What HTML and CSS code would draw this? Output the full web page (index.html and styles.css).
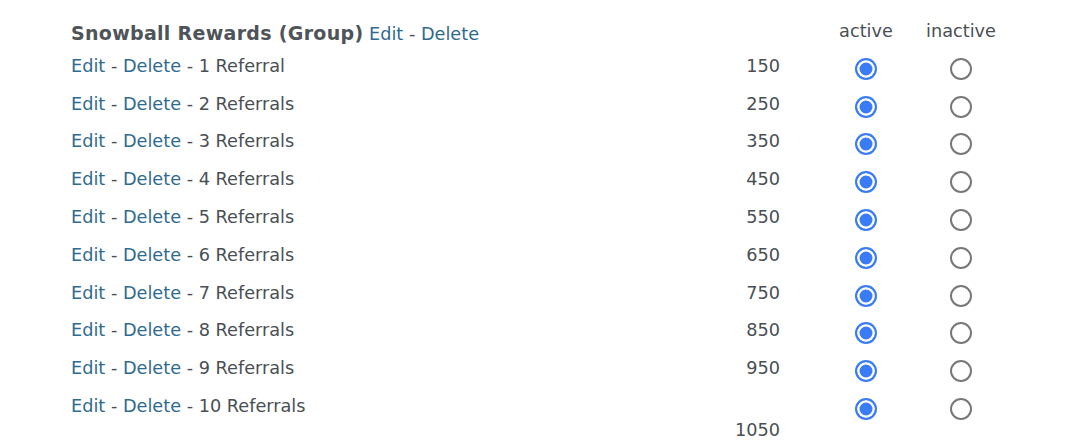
FILE: index.html
```html
<!DOCTYPE html>
<html>
<head>
<meta charset="utf-8">
<link rel="stylesheet" href="styles.css">
</head>
<body>
<table class="rewards">
  <colgroup>
    <col class="c-name"><col class="c-num"><col class="c-act"><col class="c-inact">
  </colgroup>
  <tr class="head">
    <td class="title"><b>Snowball Rewards (Group)</b> <a href="#">Edit</a> - <a href="#">Delete</a></td>
    <td></td>
    <td class="lbl">active</td>
    <td class="lbl">inactive</td>
  </tr>
  <tr><td><a href="#">Edit</a> - <a href="#">Delete</a> - 1 Referral</td><td class="num">150</td><td><input type="radio" name="r1" checked></td><td><input type="radio" name="r1"></td></tr>
  <tr><td><a href="#">Edit</a> - <a href="#">Delete</a> - 2 Referrals</td><td class="num">250</td><td><input type="radio" name="r2" checked></td><td><input type="radio" name="r2"></td></tr>
  <tr><td><a href="#">Edit</a> - <a href="#">Delete</a> - 3 Referrals</td><td class="num">350</td><td><input type="radio" name="r3" checked></td><td><input type="radio" name="r3"></td></tr>
  <tr><td><a href="#">Edit</a> - <a href="#">Delete</a> - 4 Referrals</td><td class="num">450</td><td><input type="radio" name="r4" checked></td><td><input type="radio" name="r4"></td></tr>
  <tr><td><a href="#">Edit</a> - <a href="#">Delete</a> - 5 Referrals</td><td class="num">550</td><td><input type="radio" name="r5" checked></td><td><input type="radio" name="r5"></td></tr>
  <tr><td><a href="#">Edit</a> - <a href="#">Delete</a> - 6 Referrals</td><td class="num">650</td><td><input type="radio" name="r6" checked></td><td><input type="radio" name="r6"></td></tr>
  <tr><td><a href="#">Edit</a> - <a href="#">Delete</a> - 7 Referrals</td><td class="num">750</td><td><input type="radio" name="r7" checked></td><td><input type="radio" name="r7"></td></tr>
  <tr><td><a href="#">Edit</a> - <a href="#">Delete</a> - 8 Referrals</td><td class="num">850</td><td><input type="radio" name="r8" checked></td><td><input type="radio" name="r8"></td></tr>
  <tr><td><a href="#">Edit</a> - <a href="#">Delete</a> - 9 Referrals</td><td class="num">950</td><td><input type="radio" name="r9" checked></td><td><input type="radio" name="r9"></td></tr>
  <tr><td><a href="#">Edit</a> - <a href="#">Delete</a> - 10 Referrals</td><td class="num"><br>1050</td><td><input type="radio" name="r10" checked></td><td><input type="radio" name="r10"></td></tr>
</table>
</body>
</html>
```
FILE: styles.css
```css
html, body {
  margin: 0;
  padding: 0;
  background: #fff;
}
body {
  font-family: "DejaVu Sans", sans-serif;
  font-size: 17.7px;
  line-height: 24px;
  color: #4a4f54;
}
.rewards {
  border-collapse: collapse;
  margin: 16px 0 0 71px;
  table-layout: fixed;
  width: 939px;
}
.c-name { width: 629px; }
.c-num { width: 120px; }
.c-act { width: 92px; }
.c-inact { width: 98px; }
.rewards td {
  padding: 0;
  height: 37.8px;
  vertical-align: top;
  white-space: nowrap;
}
.rewards a {
  color: #2f6b8e;
  text-decoration: none;
}
.head td { height: 32.8px; }
.title { padding-top: 5px !important; }
.title b {
  color: #4f5459;
  font-size: 19px;
  letter-spacing: 0.3px;
}
.lbl {
  text-align: center;
  padding-top: 3px !important;
  height: 34.8px !important;
}
.num {
  text-align: right;
  padding-right: 40px !important;
}
.rewards input[type="radio"] {
  -webkit-appearance: none;
  appearance: none;
  display: block;
  box-sizing: border-box;
  width: 22px;
  height: 22px;
  margin: 4px auto 0;
  border: 2px solid #787878;
  border-radius: 50%;
  background: #fff;
}
.rewards input[type="radio"]:checked {
  border-color: #3a7cf5;
  background: #3a7cf5;
  box-shadow: inset 0 0 0 2.5px #fff;
}
```
